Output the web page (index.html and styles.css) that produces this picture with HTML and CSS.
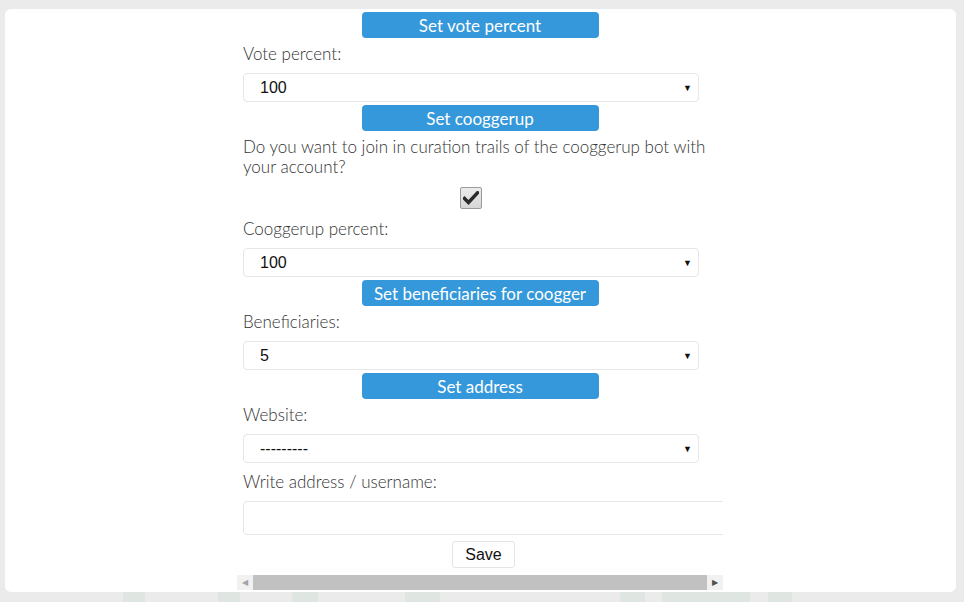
FILE: index.html
```html
<!DOCTYPE html>
<html lang="en">
<head>
    <meta charset="UTF-8">
    <meta name="viewport" content="width=device-width, initial-scale=1.0">
    <title>Settings</title>
    <link rel="stylesheet" href="styles.css">
</head>
<body>
    <div class="card">
        <div class="panel">
            <div class="scroll-area">
                <button class="set-button">Set vote percent</button>
                <label class="field-label">Vote percent:</label>
                <div class="select-wrap">
                    <select class="field-select">
                        <option>100</option>
                    </select>
                </div>

                <button class="set-button">Set cooggerup</button>
                <p class="question">Do you want to join in curation trails of the cooggerup bot with your account?</p>
                <div class="check-row">
                    <span class="check-box">
                        <svg width="16" height="14" viewBox="0 0 16 14">
                            <path d="M1.5 7.5 L5.5 11.5 L14.5 1.8" fill="none" stroke="#2b2b2b" stroke-width="3.4" stroke-linecap="square"/>
                        </svg>
                    </span>
                </div>
                <label class="field-label">Cooggerup percent:</label>
                <div class="select-wrap">
                    <select class="field-select">
                        <option>100</option>
                    </select>
                </div>

                <button class="set-button">Set beneficiaries for coogger</button>
                <label class="field-label">Beneficiaries:</label>
                <div class="select-wrap">
                    <select class="field-select">
                        <option>5</option>
                    </select>
                </div>

                <button class="set-button">Set address</button>
                <label class="field-label">Website:</label>
                <div class="select-wrap">
                    <select class="field-select">
                        <option>---------</option>
                    </select>
                </div>
                <label class="field-label label-gap">Write address / username:</label>
                <input class="field-input" type="text">
                <div class="save-row">
                    <button class="save-button">Save</button>
                </div>
            </div>
            <div class="scrollbar">
                <span class="scroll-arrow left">&#9664;</span>
                <span class="scroll-thumb"></span>
                <span class="scroll-arrow right">&#9654;</span>
            </div>
        </div>
    </div>
    <div class="watermark"></div>
</body>
</html>
```

FILE: styles.css
```css
body {
    margin: 0;
    background: #ebebeb;
    font-family: "Lato", "Open Sans", sans-serif;
    color: #333;
    height: 602px;
    overflow: hidden;
}
.card {
    margin: 9px 8px 0 5px;
    height: 583px;
    background: white;
    border-radius: 6px;
    display: flex;
    flex-direction: column;
    align-items: center;
}
.panel {
    width: 486px;
    margin-right: 1px;
    padding-top: 3px;
}
.scroll-area {
    overflow: hidden;
    display: flex;
    flex-direction: column;
}
.set-button {
    align-self: center;
    width: 237px;
    height: 26px;
    background: #3498db;
    color: white;
    border: none;
    border-radius: 4px;
    font-family: "Lato", sans-serif;
    font-size: 17px;
    padding: 0;
    margin-bottom: 6px;
}
.field-label {
    display: block;
    margin: 0 0 9px 6px;
    font-size: 17px;
    font-weight: 300;
    line-height: 20px;
}
.label-gap {
    margin-top: 6px;
}
.select-wrap {
    position: relative;
    margin-left: 6px;
    width: 456px;
    margin-bottom: 3px;
}
.select-wrap::after {
    content: "\25BC";
    position: absolute;
    right: 7px;
    top: 9px;
    font-size: 9px;
    color: #111;
    pointer-events: none;
}
.field-select {
    -webkit-appearance: none;
    appearance: none;
    width: 100%;
    height: 29px;
    background: white;
    border: 1px solid #e6e6e6;
    border-radius: 4px;
    padding: 0 0 0 16px;
    font-family: "Liberation Sans", Arial, sans-serif;
    font-size: 16px;
    color: #111;
}
.question {
    margin: 0 0 10px 6px;
    width: 470px;
    font-size: 17px;
    font-weight: 300;
    line-height: 20px;
}
.check-row {
    width: 456px;
    margin-left: 6px;
    display: flex;
    justify-content: center;
    margin-bottom: 4px;
}
.check-box {
    width: 20px;
    height: 20px;
    border: 1px solid #9a9a9a;
    border-radius: 2px;
    background: linear-gradient(#ececec, #d6d6d6);
    display: flex;
    align-items: center;
    justify-content: center;
}
.check-row + .field-label {
    margin-top: 6px;
}
.field-input {
    margin: 0 0 6px 6px;
    width: 490px;
    flex-shrink: 0;
    height: 34px;
    box-sizing: border-box;
    border: 1px solid #e6e6e6;
    border-radius: 4px;
    font-size: 16px;
}
.save-row {
    width: 481px;
    margin-left: 6px;
    display: flex;
    justify-content: center;
    margin-bottom: 7px;
}
.save-button {
    width: 63px;
    height: 27px;
    background: white;
    border: 1px solid #e4e4e4;
    border-radius: 3px;
    font-family: "Liberation Sans", Arial, sans-serif;
    font-size: 16px;
    color: #111;
    padding: 0;
}
.scrollbar {
    display: flex;
    height: 15px;
    background: #f1f1f1;
}
.scroll-arrow {
    width: 16px;
    font-size: 8px;
    line-height: 15px;
    text-align: center;
    font-family: "DejaVu Sans", sans-serif;
}
.scroll-arrow.left {
    color: #a3a3a3;
}
.scroll-arrow.right {
    color: #505050;
}
.scroll-thumb {
    flex: 1;
    background: #c1c1c1;
}
.watermark {
    height: 10px;
    background: linear-gradient(to right,
        transparent 123px, #dfe5e1 123px 145px,
        transparent 145px 218px, #dfe5e1 218px 240px,
        transparent 240px 292px, #dfe5e1 292px 318px,
        transparent 318px 405px, #dfe5e1 405px 440px,
        transparent 440px 620px, #dfe5e1 620px 645px,
        transparent 645px 662px, #dfe5e1 662px 750px,
        transparent 750px 768px, #dfe5e1 768px 792px,
        transparent 792px);
}
```
